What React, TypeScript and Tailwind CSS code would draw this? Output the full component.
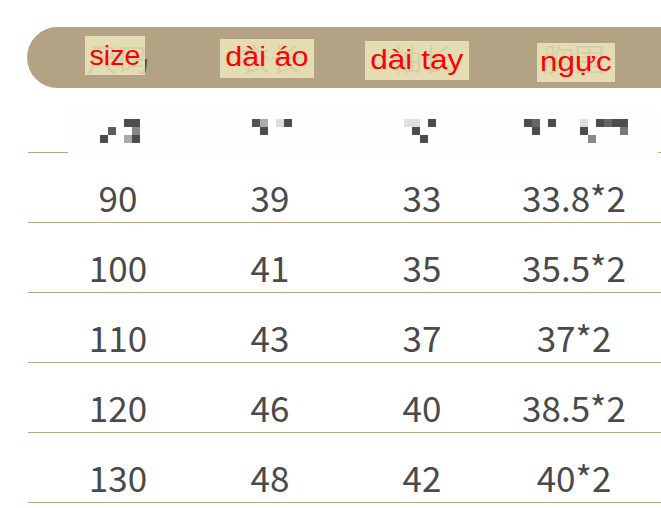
import React from "react";

const cjk = { fontFamily: '"Noto Sans CJK SC", "Noto Sans", sans-serif' };
const latin = { fontFamily: '"Liberation Sans", Arial, sans-serif' };

const rows = [
  ["90", "39", "33", "33.8*2"],
  ["100", "41", "35", "35.5*2"],
  ["110", "43", "37", "37*2"],
  ["120", "46", "40", "38.5*2"],
  ["130", "48", "42", "40*2"],
];

const D = "#4d4d4d";
const mosaic: [number, number, string][] = [
  [124, 119, D], [132, 119, D], [108, 127, "#5a5a5a"], [100, 135, D], [132, 127, "#888"], [124, 135, "#aaa"], [132, 135, D],
  [252, 119, "#555"], [260, 119, "#aaa"], [260, 127, D], [276, 119, "#ddd"], [284, 119, D],
  [404, 119, "#e0e0e0"], [412, 119, "#e0e0e0"], [428, 119, D], [412, 127, D], [420, 135, D],
  [524, 119, D], [532, 119, "#666"], [532, 127, D], [548, 119, D], [580, 119, "#ddd"], [580, 127, D],
  [588, 135, "#888"], [596, 119, D], [604, 119, "#666"], [612, 119, D], [620, 119, D], [620, 127, "#777"],
];

export default function App() {
  return (
    <div className="w-[661px] h-[508px] bg-white overflow-hidden pt-[27px]">
      {/* header bar */}
      <div className="relative ml-[27px] h-[61px] rounded-l-full rounded-r-[10px] bg-[#b4a284] grid grid-cols-[152px_152px_152px_152px] pl-[15px] items-center">
        {["尺码", "衣长", "袖长", "胸围"].map((t) => (
          <div key={t} className="text-center text-[31px] leading-none text-[#555555]" style={cjk}>
            {t}
          </div>
        ))}
        <div className="absolute left-[58px] top-[9px] w-[60px] h-[39px] bg-[#ece6ba]/85 flex justify-center overflow-visible">
          <span className="text-[27px] leading-[41px] h-[39px] text-[#ff0000] inline-block scale-x-[1.06] whitespace-nowrap" style={latin}>size</span>
        </div>
        <div className="absolute left-[193px] top-[12px] w-[94px] h-[39px] bg-[#ece6ba]/85 flex justify-center">
          <span className="text-[27px] leading-[37px] h-[39px] text-[#ff0000] inline-block scale-x-[1.13] whitespace-nowrap" style={latin}>dài áo</span>
        </div>
        <div className="absolute left-[338px] top-[14px] w-[104px] h-[39px] bg-[#ece6ba]/85 flex justify-center">
          <span className="text-[27px] leading-[39px] h-[39px] text-[#ff0000] inline-block scale-x-[1.17] whitespace-nowrap" style={latin}>dài tay</span>
        </div>
        <div className="absolute left-[510px] top-[16px] w-[78px] h-[39px] bg-[#ece6ba]/85 flex justify-center">
          <span className="text-[27px] leading-[39px] h-[39px] text-[#ff0000] inline-block scale-x-[1.16] whitespace-nowrap" style={latin}>ngực</span>
        </div>
      </div>

      <div className="ml-[28px]">
        {/* unit row (pixelated) */}
        <div className="relative h-[65px] border-b border-[#bfa680]">
          <svg className="absolute left-0 top-0 overflow-visible" width="633" height="70" viewBox="28 88 633 70">
            <rect x="68" y="106" width="590" height="50" fill="#fefefe" />
            {mosaic.map(([x, y, c], i) => (
              <rect key={i} x={x} y={y} width="8" height="8" fill={c} />
            ))}
          </svg>
        </div>
        {rows.map((r) => (
          <div
            key={r[0]}
            className="h-[70px] border-b border-[#bfa680] grid grid-cols-[152px_152px_152px_152px] pl-[14px] items-end pb-[8px] text-[35px] leading-[34px] text-[#4a4a4a] text-center"
            style={cjk}
          >
            {r.map((c, i) => (
              <div key={i}>{c}</div>
            ))}
          </div>
        ))}
      </div>
    </div>
  );
}
